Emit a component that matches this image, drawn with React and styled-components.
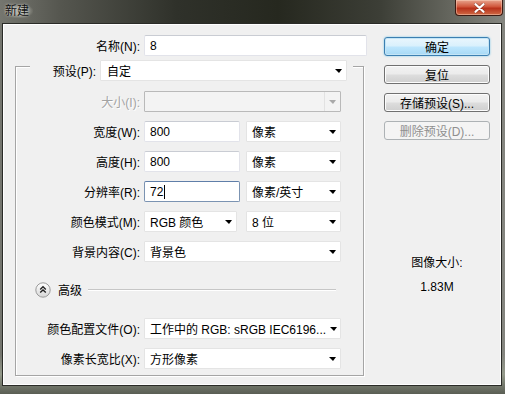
import React from "react";
import styled, { createGlobalStyle } from "styled-components";

const GlobalStyle = createGlobalStyle`
  html, body {
    margin: 0;
    padding: 0;
    background: #2e302a;
  }
  * {
    box-sizing: border-box;
  }
`;

const FONT = `"Liberation Sans", "Noto Sans CJK SC", sans-serif`;

const Window = styled.div`
  width: 505px;
  height: 394px;
  display: flex;
  flex-direction: column;
  padding: 0 3px 0 2px;
  background:
    linear-gradient(180deg, rgba(0, 0, 0, 0) 0%, rgba(0, 0, 0, 0) 90%, rgba(150, 156, 140, 0.9) 95%, #5a5e54 100%),
    linear-gradient(90deg, #75766f 0%, #55564f 12%, #2f312a 35%, #26281f 55%, #3c3e36 75%, #6d6e66 92%, #858680 100%);
  font-family: ${FONT};
  font-size: 12px;
  color: #000;
`;

const TitleBar = styled.div`
  height: 23px;
  display: flex;
  align-items: flex-start;
  justify-content: space-between;
`;

const Title = styled.div`
  margin: 4px 0 0 2px;
  padding: 0 4px 0 1px;
  font-size: 12px;
  line-height: 14px;
  color: #111;
  background: radial-gradient(ellipse at center, rgba(190, 190, 180, 0.75) 30%, rgba(190, 190, 180, 0) 75%);
  text-shadow: 0 0 3px rgba(255, 255, 255, 0.6);
`;

const CloseBtn = styled.div`
  width: 48px;
  height: 16px;
  margin-right: -1px;
  display: flex;
  align-items: center;
  justify-content: center;
  border: 1px solid #3b1a12;
  border-top: none;
  border-radius: 0 0 4px 4px;
  background: linear-gradient(180deg, #e8a58e 0%, #d0553a 45%, #b8311a 55%, #cf6a45 100%);
  box-shadow: inset 0 0 0 1px rgba(255, 220, 200, 0.45);
`;

const Client = styled.div`
  flex: 1;
  display: flex;
  margin-bottom: 8px;
  background: #f0f0f0;
  border: 1px solid #2a2b27;
  box-shadow: inset 1px 1px 0 #ffffff, inset -1px -1px 0 #ffffff;
`;

const LeftCol = styled.div`
  width: 370px;
  padding-top: 11px;
  display: flex;
  flex-direction: column;
`;

const RightCol = styled.div`
  width: 106px;
  margin-left: 11px;
  padding-top: 13px;
  display: flex;
  flex-direction: column;
  gap: 9px;
`;

const Row = styled.div`
  display: flex;
  align-items: center;
  height: 21px;
  gap: 4px;
`;

const Label = styled.label`
  width: ${(p) => p.$w}px;
  flex: none;
  text-align: right;
  white-space: nowrap;
  color: ${(p) => (p.$disabled ? "#a3a3a3" : "#000")};
  text-shadow: ${(p) => (p.$disabled ? "1px 1px 0 #ffffff" : "none")};
`;

const TextBox = styled.div`
  width: ${(p) => p.$w}px;
  height: 21px;
  flex: none;
  display: flex;
  align-items: center;
  padding-left: 5px;
  background: #fff;
  border: 1px solid ${(p) => (p.$focus ? "#7b93b2" : "#e2e3ea")};
  border-top-color: ${(p) => (p.$focus ? "#5f7ea8" : "#c9ccd3")};
  border-radius: 2px;
`;

const Caret = styled.span`
  display: inline-block;
  width: 1px;
  height: 14px;
  margin-left: 1px;
  background: #000;
`;

const Select = styled.div`
  width: ${(p) => p.$w}px;
  height: 21px;
  flex: none;
  display: flex;
  align-items: center;
  justify-content: space-between;
  margin-left: ${(p) => p.$ml ?? 0}px;
  padding: 0 4px 0 ${(p) => p.$pad ?? 5}px;
  background: ${(p) => (p.$disabled ? "#f3f3f3" : "#fff")};
  border: 1px solid ${(p) => (p.$disabled ? "#b9b9b9" : "#e4e4e4")};
  border-radius: 1px;
  white-space: nowrap;
  overflow: hidden;
`;

const Arrow = styled.span`
  flex: none;
  width: 0;
  height: 0;
  margin-left: 4px;
  border-left: 4px solid transparent;
  border-right: 3px solid transparent;
  border-top: 4px solid ${(p) => (p.$disabled ? "#a9a9a9" : "#000")};
`;

const DisabledDrop = styled.span`
  flex: none;
  align-self: stretch;
  width: 16px;
  margin-right: -4px;
  display: flex;
  align-items: center;
  justify-content: center;
  border-left: 1px solid #e2e2e2;
  & > span {
    margin-left: 0;
  }
`;

const Group = styled.div`
  width: 349px;
  margin: 10px 0 0 12px;
  padding-bottom: 6px;
  border: 1px solid #a5a5a5;
  box-shadow: inset 1px 1px 0 #ffffff, 1px 1px 0 #ffffff;
  display: flex;
  flex-direction: column;
`;

const GroupHead = styled.div`
  width: 323px;
  margin: -7px 0 0 14px;
  padding-right: 6px;
  background: #f0f0f0;
`;

const Stack = styled.div`
  margin-top: ${(p) => p.$mt}px;
  display: flex;
  flex-direction: column;
  gap: 9px;
`;

const AdvRow = styled.div`
  margin: 20px 0 0 19px;
  height: 15px;
  display: flex;
  align-items: center;
`;

const AdvText = styled.span`
  margin-left: 7px;
`;

const AdvLine = styled.span`
  width: 248px;
  height: 2px;
  margin-left: 6px;
  border-top: 1px solid #c6c6c6;
  border-bottom: 1px solid #ffffff;
`;

const PushButton = styled.div`
  height: 19px;
  display: flex;
  align-items: center;
  justify-content: center;
  border-radius: 3px;
  border: 1px solid ${(p) => (p.$primary ? "#3c7fb1" : p.$disabled ? "#adb2b5" : "#707070")};
  color: ${(p) => (p.$disabled ? "#8f8f8f" : "#000")};
  background: ${(p) =>
    p.$primary
      ? "linear-gradient(180deg, #eaf6fd 0%, #d9f0fc 48%, #bee6fd 52%, #a7d9f5 100%)"
      : p.$disabled
      ? "#f4f4f4"
      : "linear-gradient(180deg, #f2f2f2 0%, #ebebeb 48%, #dddddd 52%, #cfcfcf 100%)"};
  box-shadow: ${(p) =>
    p.$primary ? "inset 0 0 0 1px #c4e5f6, 0 0 2px #6cc0e8" : p.$disabled ? "none" : "inset 0 0 0 1px #fcfcfc"};
  white-space: nowrap;
`;

const SizeInfo = styled.div`
  margin-top: 106px;
  display: flex;
  flex-direction: column;
  align-items: center;
  gap: 8px;
  line-height: 16px;
  text-shadow: 0 0 2px #ffffff;
`;

function AdvIcon() {
  return (
    <svg width="16" height="16" viewBox="0 0 16 16">
      <defs>
        <linearGradient id="advg" x1="0" y1="0" x2="0" y2="1">
          <stop offset="0" stopColor="#ffffff" />
          <stop offset="1" stopColor="#d6d6d6" />
        </linearGradient>
      </defs>
      <circle cx="8" cy="8" r="7.2" fill="url(#advg)" stroke="#9a9a9a" strokeWidth="1" />
      <path d="M5.2 7.4 L8 4.8 L10.8 7.4" fill="none" stroke="#222" strokeWidth="1.4" />
      <path d="M5.2 10.6 L8 8 L10.8 10.6" fill="none" stroke="#222" strokeWidth="1.4" />
    </svg>
  );
}

function CloseGlyph() {
  return (
    <svg width="11" height="10" viewBox="0 0 11 10">
      <path d="M1.5 1.2 L9.5 8.8 M9.5 1.2 L1.5 8.8" stroke="#3a120a" strokeWidth="3.4" strokeLinecap="round" opacity="0.35" />
      <path d="M1.5 1.2 L9.5 8.8 M9.5 1.2 L1.5 8.8" stroke="#ffffff" strokeWidth="2.2" strokeLinecap="round" />
    </svg>
  );
}

function Dropdown({ w, pad, ml, children }) {
  return (
    <Select $w={w} $pad={pad} $ml={ml}>
      <span>{children}</span>
      <Arrow />
    </Select>
  );
}

export default function App() {
  return (
    <>
      <GlobalStyle />
      <Window>
        <TitleBar>
          <Title>新建</Title>
          <CloseBtn>
            <CloseGlyph />
          </CloseBtn>
        </TitleBar>
        <Client>
          <LeftCol>
            <Row>
              <Label $w={137}>名称(N):</Label>
              <TextBox $w={223}>8</TextBox>
            </Row>
            <Group>
              <GroupHead>
                <Row>
                  <Label $w={66}>预设(P):</Label>
                  <Dropdown w={247} pad={6}>自定</Dropdown>
                </Row>
              </GroupHead>
              <Stack $mt={10}>
                <Row>
                  <Label $w={124} $disabled>
                    大小(I):
                  </Label>
                  <Select $w={197} $disabled>
                    <span />
                    <DisabledDrop>
                      <Arrow $disabled />
                    </DisabledDrop>
                  </Select>
                </Row>
                <Row>
                  <Label $w={124}>宽度(W):</Label>
                  <TextBox $w={96}>800</TextBox>
                  <Dropdown w={95} ml={2}>像素</Dropdown>
                </Row>
                <Row>
                  <Label $w={124}>高度(H):</Label>
                  <TextBox $w={96}>800</TextBox>
                  <Dropdown w={95} ml={2}>像素</Dropdown>
                </Row>
                <Row>
                  <Label $w={124}>分辨率(R):</Label>
                  <TextBox $w={96} $focus>
                    72
                    <Caret />
                  </TextBox>
                  <Dropdown w={95} ml={2}>像素/英寸</Dropdown>
                </Row>
                <Row>
                  <Label $w={124}>颜色模式(M):</Label>
                  <Dropdown w={93}>RGB 颜色</Dropdown>
                  <Dropdown w={95} ml={5}>8 位</Dropdown>
                </Row>
                <Row>
                  <Label $w={124}>背景内容(C):</Label>
                  <Dropdown w={197}>背景色</Dropdown>
                </Row>
              </Stack>
              <AdvRow>
                <AdvIcon />
                <AdvText>高级</AdvText>
                <AdvLine />
              </AdvRow>
              <Stack $mt={21}>
                <Row>
                  <Label $w={124}>颜色配置文件(O):</Label>
                  <Dropdown w={197}>工作中的 RGB: sRGB IEC6196...</Dropdown>
                </Row>
                <Row>
                  <Label $w={124}>像素长宽比(X):</Label>
                  <Dropdown w={197}>方形像素</Dropdown>
                </Row>
              </Stack>
            </Group>
          </LeftCol>
          <RightCol>
            <PushButton $primary>确定</PushButton>
            <PushButton>复位</PushButton>
            <PushButton>存储预设(S)...</PushButton>
            <PushButton $disabled>删除预设(D)...</PushButton>
            <SizeInfo>
              <span>图像大小:</span>
              <span>1.83M</span>
            </SizeInfo>
          </RightCol>
        </Client>
      </Window>
    </>
  );
}
